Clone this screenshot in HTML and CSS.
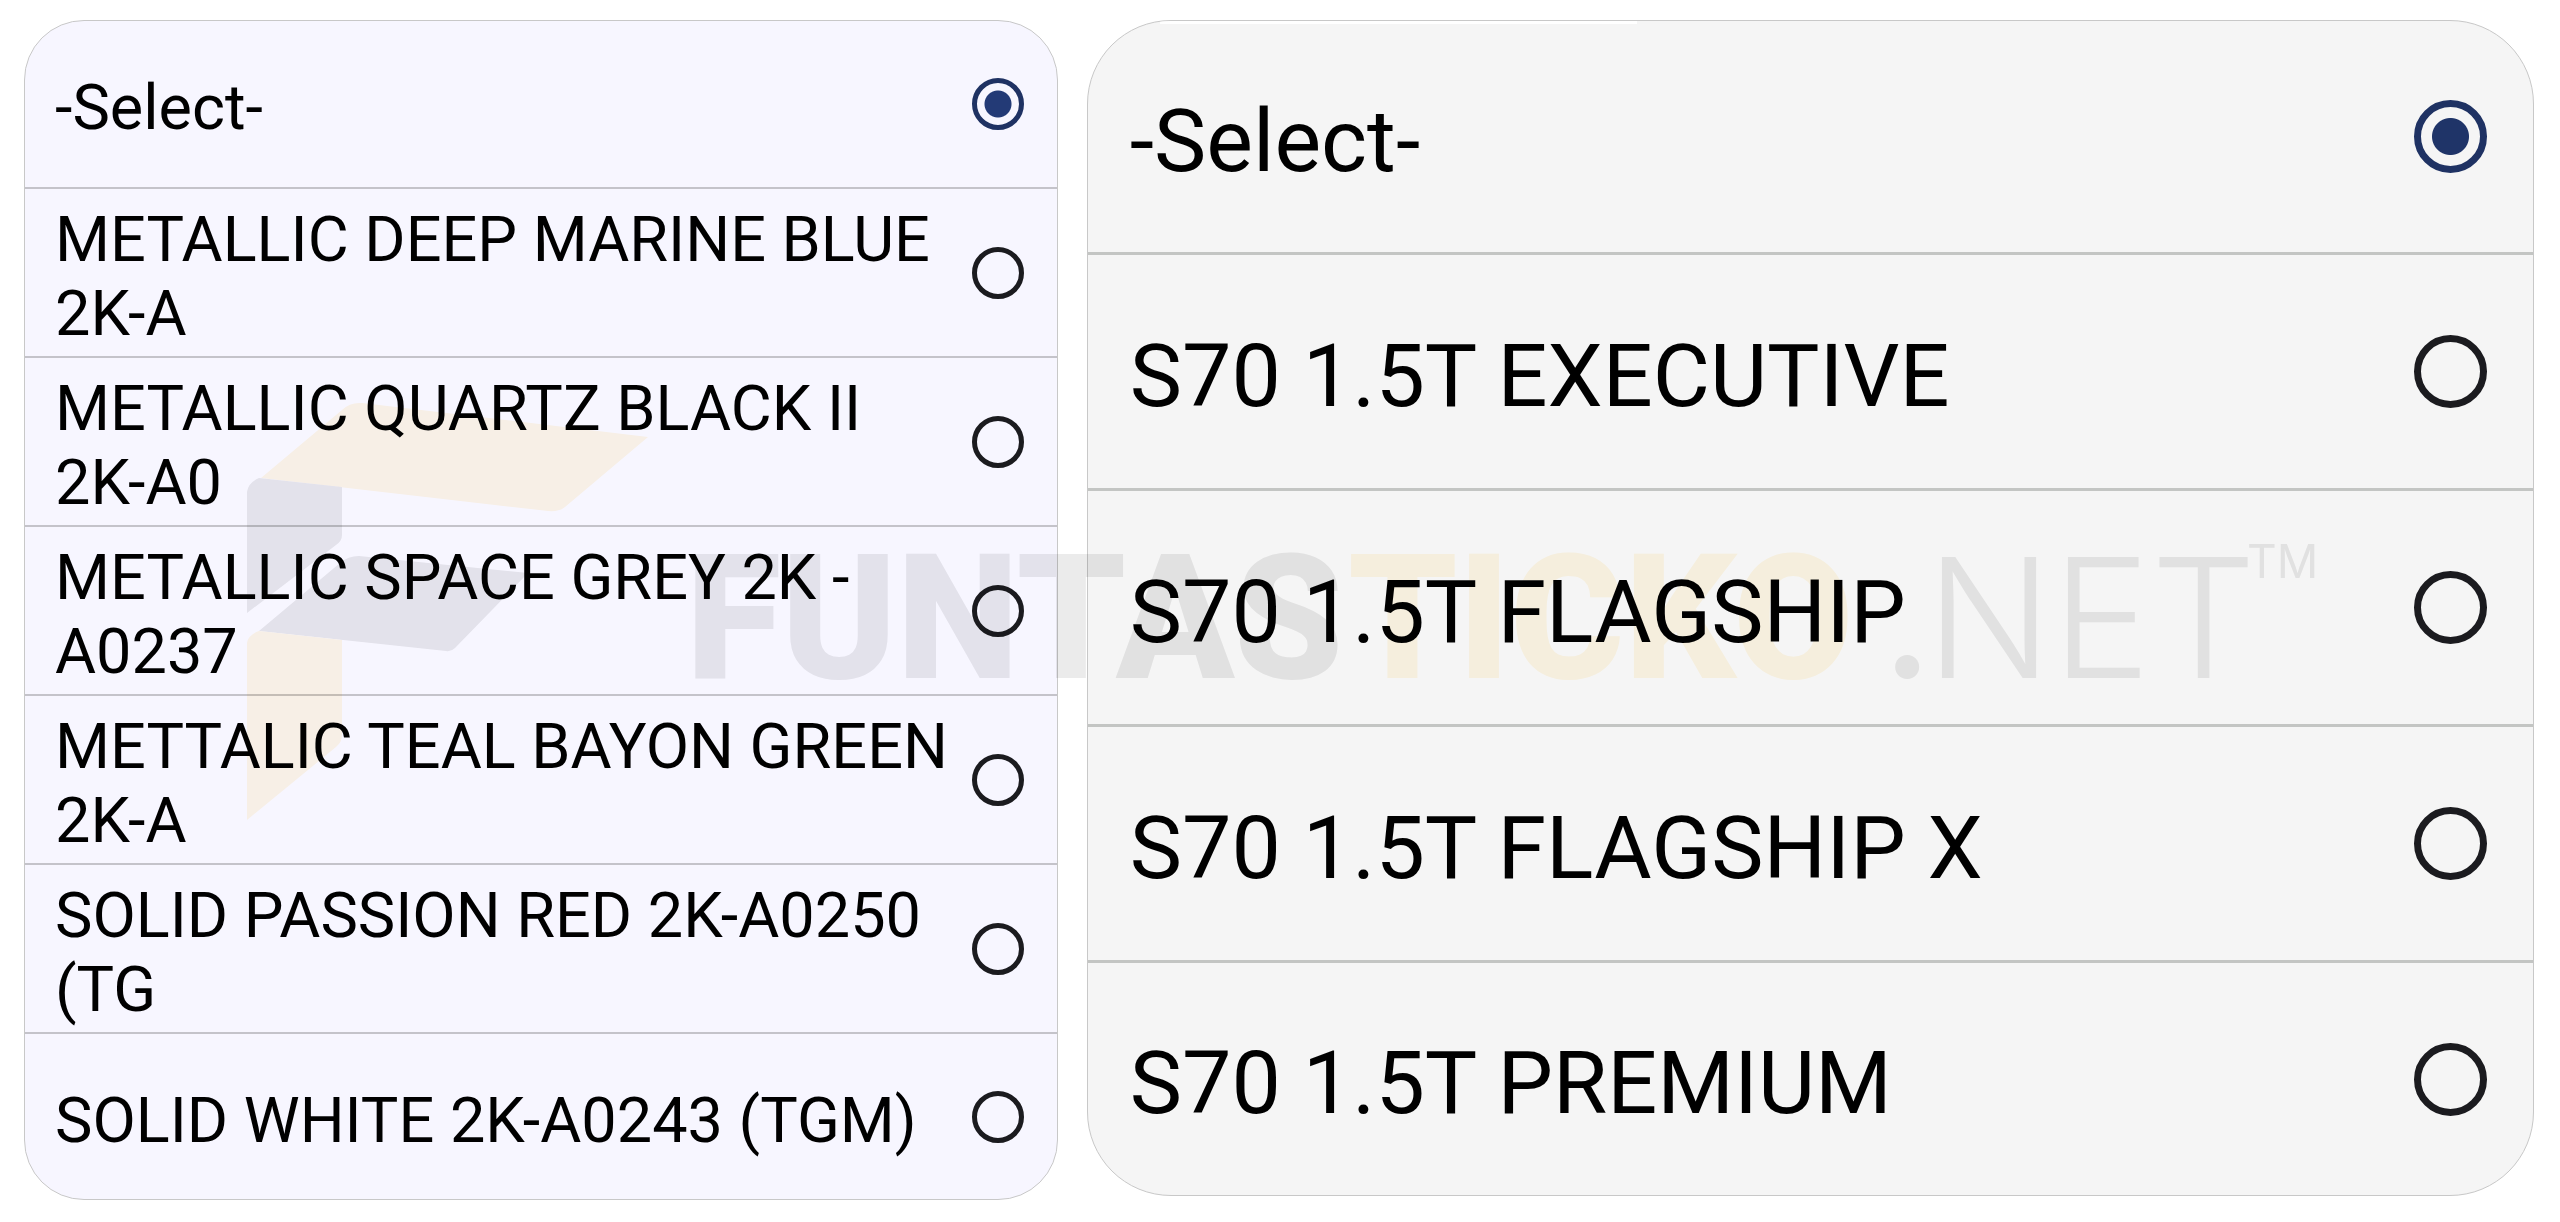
FILE: index.html
```html
<!DOCTYPE html>
<html lang="en">
<head>
    <meta charset="UTF-8">
    <meta name="viewport" content="width=device-width, initial-scale=1.0">
    <title>Select variant</title>
    <link rel="stylesheet" href="styles.css">
</head>
<body>
    <div id="outer">
        <ul class="list colours">
            <li><label for="c0">-Select-</label><input type="radio" name="colour" id="c0" checked></li>
            <li><label for="c1">METALLIC DEEP MARINE BLUE<br>2K-A</label><input type="radio" name="colour" id="c1"></li>
            <li><label for="c2">METALLIC QUARTZ BLACK II<br>2K-A0</label><input type="radio" name="colour" id="c2"></li>
            <li><label for="c3">METALLIC SPACE GREY 2K -<br>A0237</label><input type="radio" name="colour" id="c3"></li>
            <li><label for="c4">METTALIC TEAL BAYON GREEN<br>2K-A</label><input type="radio" name="colour" id="c4"></li>
            <li><label for="c5">SOLID PASSION RED 2K-A0250<br>(TG</label><input type="radio" name="colour" id="c5"></li>
            <li><label for="c6">SOLID WHITE 2K-A0243 (TGM)</label><input type="radio" name="colour" id="c6"></li>
        </ul>
        <ul class="list models">
            <li><label for="m0">-Select-</label><input type="radio" name="model" id="m0" checked></li>
            <li><label for="m1">S70 1.5T EXECUTIVE</label><input type="radio" name="model" id="m1"></li>
            <li><label for="m2">S70 1.5T FLAGSHIP</label><input type="radio" name="model" id="m2"></li>
            <li><label for="m3">S70 1.5T FLAGSHIP X</label><input type="radio" name="model" id="m3"></li>
            <li><label for="m4">S70 1.5T PREMIUM</label><input type="radio" name="model" id="m4"></li>
        </ul>

        <!-- watermark -->
        <svg class="watermark" viewBox="0 0 2560 1222">
            <path class="gold" d="M261 478 L342 410 Q350 402 362 403 L648 437 L565 507 Q559 512 548 511 Z"/>
            <path class="grey" d="M247 613 V492 Q248 483 259 478 L342 487 V535 Q342 541 336 545 Z"/>
            <path class="grey" d="M259 631 L340 563 Q348 556 359 556 L528 573 L455 648 Q451 652 446 651 Z"/>
            <path class="gold" d="M247 820 V643 Q248 635 259 631 L342 640 V735 Q342 742 336 747 Z"/>
            <text class="heavy grey" x="686" y="678">FUNTAS</text>
            <text class="heavy gold" x="1348" y="678">TICKO</text>
            <text class="dot grey" x="1882" y="678">.</text>
            <text class="light grey" x="1926" y="678">NET</text>
            <text class="tm grey" x="2247" y="578">TM</text>
        </svg>
    </div>
</body>
</html>
```
FILE: styles.css
```css
* {
    margin: 0;
    padding: 0;
    box-sizing: border-box;
}

body{
    background-color: white;
    font-family: Roboto, "Liberation Sans", sans-serif;
    color: black;
}

#outer{
    position: relative;
    display: grid;
    grid-template-columns: 5fr 7fr;
    align-items: start;
    gap: 29px;
    padding: 20px 26px 16px 24px;
}

.list{
    list-style: none;
    position: relative;
    overflow: hidden;
    border: 1px solid #c8c8c8;
}

.list li{
    display: flex;
    align-items: center;
    justify-content: space-between;
}

.list li:last-child{
    border-bottom: 0;
}

.list label{
    flex: 1;
    padding-top: 8px;
}

.list input{
    appearance: none;
    flex: none;
    border: 5px solid #1b1b1f;
    border-radius: 50%;
}

.list input:checked{
    border-color: #1f3263;
}

/* left list */
.colours{
    background-color: #f7f6ff;
    border-radius: 60px;
    font-size: 63px;
    line-height: 74px;
}

.colours li{
    min-height: 169px;
    padding: 0 33px 0 30px;
    border-bottom: 2px solid #c4c3ca;
}

.colours li:first-child{
    min-height: 168px;
}

.colours li:last-child{
    min-height: 165px;
}

.colours input{
    width: 52px;
    height: 52px;
}

.colours input:checked{
    background: radial-gradient(circle, #233a76 13px, transparent 14px);
}

/* right list */
.models{
    background-color: #f5f5f5;
    border-radius: 84px;
    font-size: 88px;
    line-height: 104px;
}

/* the top line starts only past the first third */
.models::before{
    content: "";
    position: absolute;
    top: -1px;
    left: 5%;
    width: 33%;
    height: 4px;
    background-color: white;
}

.models li{
    min-height: 236px;
    padding: 0 46px 0 42px;
    border-bottom: 3px solid #c3c5c3;
}

.models li:first-child{
    min-height: 234px;
}

.models li:last-child{
    min-height: 232px;
}

.models input{
    width: 73px;
    height: 73px;
    border-width: 7px;
}

.models input:checked{
    background: radial-gradient(circle, #1f3468 18px, transparent 19px);
}

/* watermark over both lists */
.watermark{
    position: absolute;
    top: 0;
    left: 0;
    width: 100%;
    mix-blend-mode: multiply;
    pointer-events: none;
}

.grey{
    fill: #ebebeb;
}

.gold{
    fill: #fff8e6;
}

.heavy{
    font: 900 174px Roboto, sans-serif;
}

.dot{
    font: 500 166px Inter, sans-serif;
}

.light{
    font: 300 166px Inter, sans-serif;
}

.tm{
    font: 400 46px Inter, sans-serif;
}
```
